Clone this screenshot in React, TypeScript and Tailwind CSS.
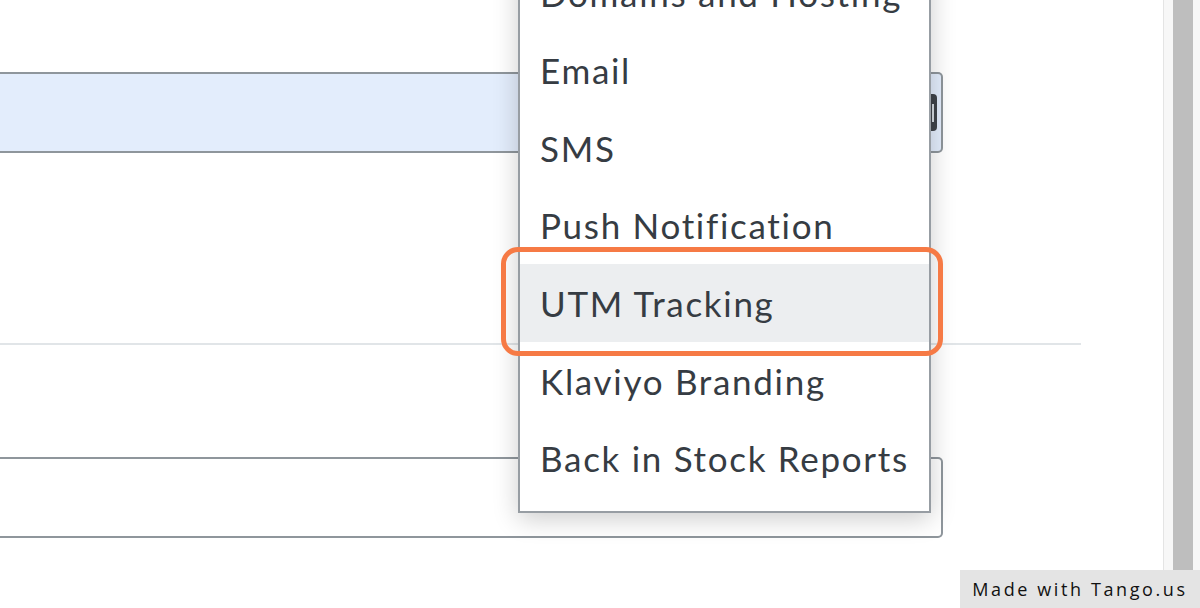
import React from "react";

const items = [
  "Domains and Hosting",
  "Email",
  "SMS",
  "Push Notification",
  "UTM Tracking",
  "Klaviyo Branding",
  "Back in Stock Reports",
];

export default function App() {
  return (
    <div
      className="relative flex h-[608px] w-[1200px] overflow-hidden bg-white"
      style={{ fontFamily: "Lato, 'Noto Sans', sans-serif" }}
    >
      {/* main content */}
      <div className="relative flex-1">
        <div className="flex flex-col">
          <div className="h-[72px]" />
          <div className="relative h-[81px] w-[943px] rounded-r-[5px] border-2 border-l-0 border-[#8f969c] bg-[#e3edfc]">
            <div className="absolute left-[922px] top-[20px] flex h-[37px] w-[15px] items-center justify-center rounded-[4px] bg-[#3f444a]">
              <div className="ml-[7px] h-[18px] w-[2px] bg-[#d5dbe1]" />
            </div>
          </div>
          <div className="h-[190px]" />
          <div className="h-[2px] w-[1081px] bg-[#e1e5e8]" />
          <div className="h-[112px]" />
          <div className="h-[81px] w-[943px] rounded-r-[5px] border-2 border-l-0 border-[#8f969c] bg-white" />
        </div>

        {/* dropdown menu */}
        <div className="absolute left-[518px] top-[-48px] w-[413px] border-2 border-[#979da3] bg-white pb-[14px] shadow-[0_6px_24px_rgba(0,0,0,0.2)]">
          {items.map((label) => (
            <div
              key={label}
              className={`flex h-[77.6px] items-center whitespace-nowrap pl-[20px] text-[35px] tracking-[1.7px] text-[#363c43] ${
                label === "UTM Tracking" ? "bg-[#eceef0]" : ""
              }`}
            >
              {label}
            </div>
          ))}
        </div>

        {/* orange highlight */}
        <div className="pointer-events-none absolute left-[501px] top-[247px] h-[109px] w-[442px] rounded-[17px] border-[5px] border-[#f67a45]" />
      </div>

      {/* scrollbar */}
      <div className="flex h-full w-[37px] border-l border-[#e4e4e4] bg-[#f7f7f7]">
        <div className="ml-[9px] h-[570px] w-[20px] bg-[#bebebe]" />
      </div>

      {/* Tango badge */}
      <div
        className="absolute bottom-0 right-0 flex h-[38px] w-[240px] items-center justify-center bg-[#e4e4e4] text-[18px] tracking-[2.6px] text-[#111]"
        style={{ fontFamily: "'Open Sans', 'Noto Sans', sans-serif" }}
      >
        Made with Tango.us
      </div>
    </div>
  );
}
